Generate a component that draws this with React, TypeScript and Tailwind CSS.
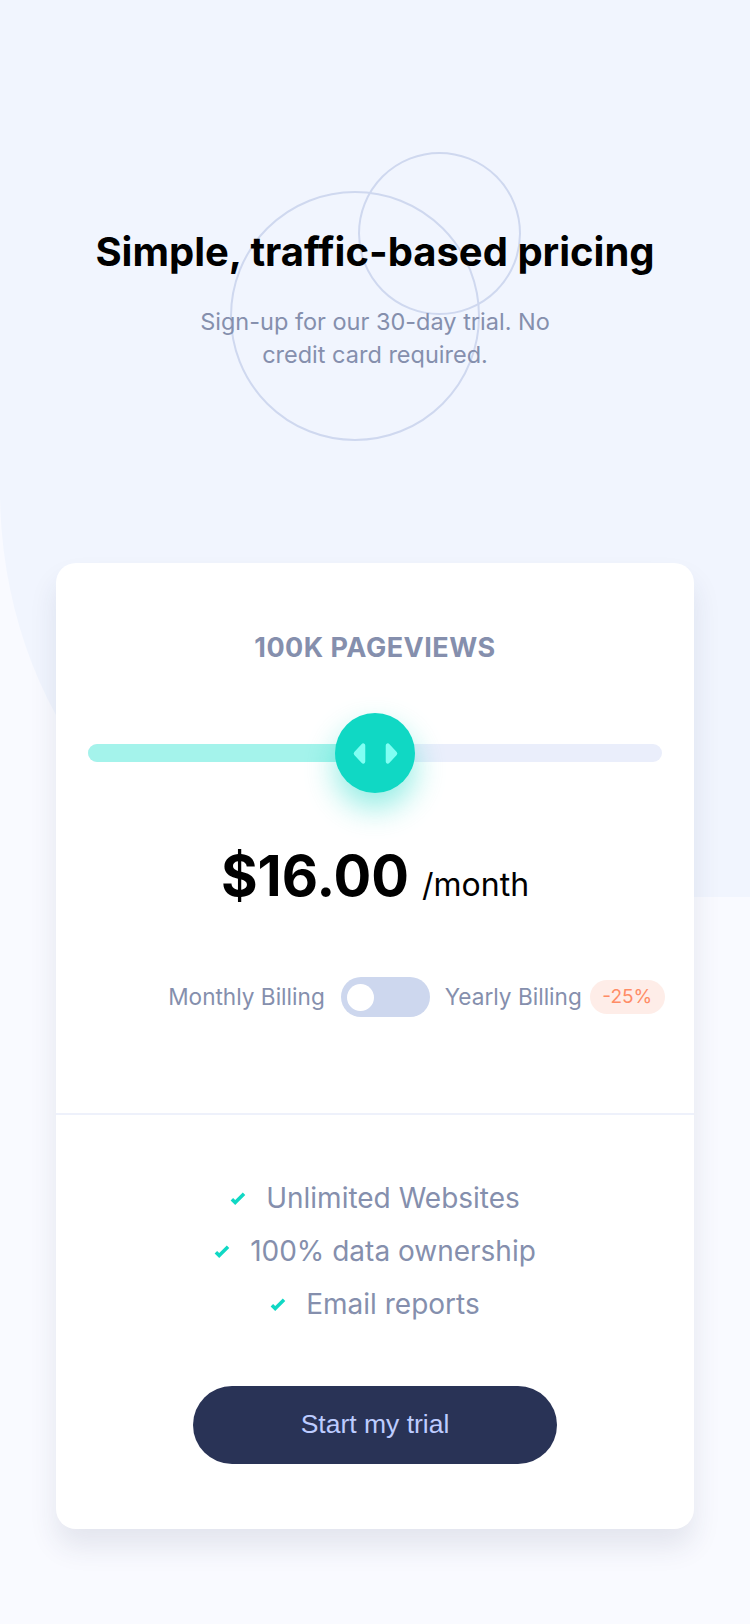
import React from 'react';

const features = ['Unlimited Websites', '100% data ownership', 'Email reports'];

const CheckIcon = () => (
  <svg width="16" height="14" viewBox="0 0 9 8" fill="none">
    <path d="M1 4.134l1.907 1.908L7.949 1" stroke="#10D8C4" strokeWidth="2" />
  </svg>
);

const SliderArrows = () => (
  <svg width="45" height="27" viewBox="0 0 22 13">
    <path
      d="M16 2.558v7.884a1 1 0 001.735.679l3.639-3.943a1 1 0 000-1.356l-3.64-3.943A1 1 0 0016 2.558zm-10 0v7.884a1 1 0 01-1.735.679L.626 7.178a1 1 0 010-1.356l3.64-3.943A1 1 0 016 2.558z"
      fill="#80FFF3"
    />
  </svg>
);

const App: React.FC = () => {
  return (
    <div className="relative min-h-screen bg-[#f9faff] font-['Inter',sans-serif] overflow-hidden">
      {/* background shape */}
      <div className="absolute inset-x-0 top-0 h-[897px] bg-[#f1f5fe] rounded-bl-[335px_407px]" />

      <div className="relative">
        {/* Header */}
        <div className="relative pt-[228px] text-center">
          <div className="absolute left-[230px] top-[191px] w-[250px] h-[250px] rounded-full border-2 border-[#cfd8ef]" />
          <div className="absolute left-[358px] top-[152px] w-[163px] h-[163px] rounded-full border-2 border-[#cfd8ef]" />
          <h1 className="relative text-[40px] leading-[48px] font-bold text-black">
            Simple, traffic-based pricing
          </h1>
          <p className="relative mx-auto mt-[29px] w-[380px] text-[23.5px] leading-[33px] text-[#858fad]">
            Sign-up for our 30-day trial. No credit card required.
          </p>
        </div>

        {/* Card */}
        <div className="mx-[56px] mt-[192px] bg-white rounded-[20px] shadow-[0_18px_28px_rgba(40,50,90,0.10)]">
          <div className="px-[32px] pt-[68px] pb-[96px]">
            <div className="text-center text-[27px] leading-[34px] font-bold tracking-[0.5px] text-[#858fad]">
              100K PAGEVIEWS
            </div>

            {/* Slider */}
            <div className="relative mt-[48px] h-[80px] flex items-center">
              <div className="w-full h-[18px] rounded-full bg-[#eaeefb] flex overflow-hidden">
                <div className="w-1/2 h-full bg-[#a4f3eb]" />
              </div>
              <div className="absolute left-1/2 top-0 -ml-[40px] w-[80px] h-[80px] rounded-full bg-[#10d8c4] shadow-[0_15px_30px_rgba(16,216,196,0.45)] flex items-center justify-center">
                <SliderArrows />
              </div>
            </div>

            {/* Price */}
            <div className="mt-[51px] flex items-baseline justify-center gap-[13px] text-black">
              <span className="text-[56px] leading-[64px] font-bold">$16.00</span>
              <span className="text-[32px] leading-[64px]">/month</span>
            </div>

            {/* Billing */}
            <div className="mt-[60px] flex items-center justify-center text-[22.6px] text-[#858fad]">
              <span>Monthly Billing</span>
              <div className="ml-[16px] w-[89px] h-[40px] rounded-full bg-[#cdd7ee] flex items-center px-[6px]">
                <div className="w-[27px] h-[27px] rounded-full bg-white" />
              </div>
              <span className="relative ml-[15px]">
                Yearly Billing
                <span className="absolute left-full top-1/2 -translate-y-1/2 ml-[8px] w-[75px] h-[34px] rounded-full bg-[#feede8] text-[#ff8c66] text-[19px] flex items-center justify-center">
                  -25%
                </span>
              </span>
            </div>
          </div>

          <div className="h-[2px] bg-[#eef1fb]" />

          <div className="pt-[57px] pb-[65px] flex flex-col items-center">
            <ul className="flex flex-col items-center">
              {features.map((f) => (
                <li key={f} className="flex items-center gap-[20px] text-[28px] leading-[53px] text-[#858fad]">
                  <CheckIcon />
                  <span>{f}</span>
                </li>
              ))}
            </ul>
            <button className="mt-[55px] w-[364px] h-[78px] rounded-full bg-[#293356] text-[#bdccff] text-[26.5px] font-['Liberation_Sans',Arial,sans-serif]">
              Start my trial
            </button>
          </div>
        </div>
        <div className="h-[96px]" />
      </div>
    </div>
  );
};

export default App;
